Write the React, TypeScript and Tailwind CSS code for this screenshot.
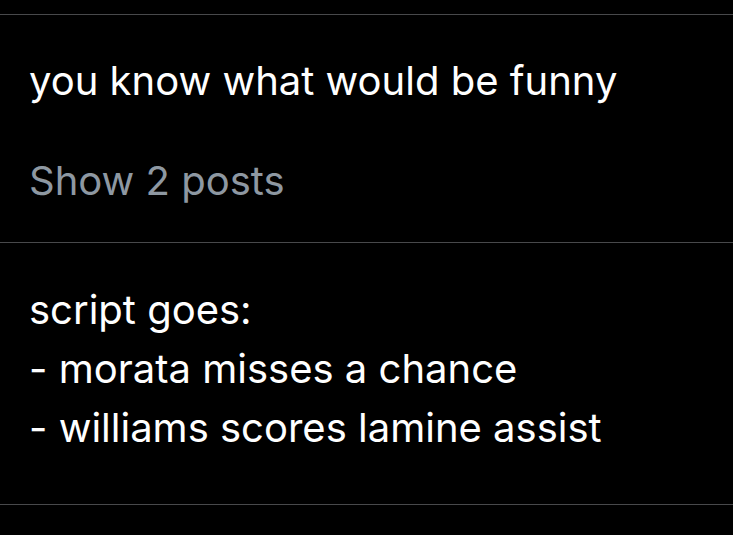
import React from "react";

const Post: React.FC<{ children: React.ReactNode; className?: string }> = ({ children, className }) => (
    <div className={`border-b border-[#48494b] px-[29px] ${className ?? ""}`}>{children}</div>
);

const App: React.FC = () => {
    return (
        <div
            className="min-h-screen w-full bg-black text-white pt-[14px] overflow-hidden"
            style={{ fontFamily: "Inter, 'Noto Sans', sans-serif" }}
        >
            <div className="border-t border-[#48494b]">
                <Post className="pt-[36px] pb-[32px]">
                    <p className="text-[40px] leading-[59px]">you know what would be funny</p>
                    <button className="mt-[41px] block text-[40px] leading-[59px] text-[#8e98a2]">
                        Show 2 posts
                    </button>
                </Post>
                <Post className="pt-[37px] pb-[47px]">
                    <p className="text-[40px] leading-[59px]">
                        script goes:
                        <br />- morata misses a chance
                        <br />- williams scores lamine assist
                    </p>
                </Post>
            </div>
        </div>
    );
};

export default App;
